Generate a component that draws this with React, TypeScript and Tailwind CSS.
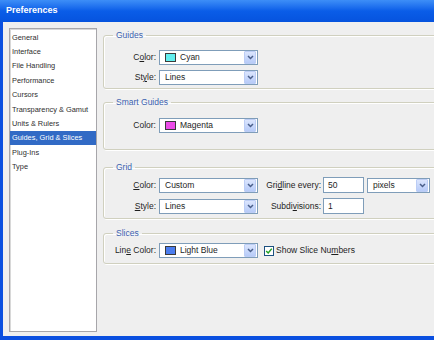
import React from 'react';

const sections = [
  'General',
  'Interface',
  'File Handling',
  'Performance',
  'Cursors',
  'Transparency & Gamut',
  'Units & Rulers',
  'Guides, Grid & Slices',
  'Plug-Ins',
  'Type',
];

// label with one underlined access key
function Label({ text, u }: { text: string; u: number }) {
  return (
    <span>
      {text.slice(0, u)}
      <span className="underline">{text[u]}</span>
      {text.slice(u + 1)}
    </span>
  );
}

function Select({ value, swatch, width = 'w-[99px]' }: { value: string; swatch?: string; width?: string }) {
  return (
    <div className={`${width} h-[15px] flex items-center bg-white border border-[#7f9db9]`}>
      {swatch ? (
        <span className="ml-[5px] w-[11px] h-[9px] border border-[#3a3a3a]" style={{ backgroundColor: swatch }} />
      ) : null}
      <span className={swatch ? 'ml-[4px] flex-1' : 'ml-[5px] flex-1'}>{value}</span>
      <div className="w-[12px] h-[13px] mr-[1px] flex items-center justify-center bg-gradient-to-b from-[#dbe5fd] to-[#b7cbf8] border border-[#bccdf5] rounded-[1px]">
        <svg width="7" height="5" viewBox="0 0 7 5">
          <path d="M1 1 L3.5 3.5 L6 1" fill="none" stroke="#4a5f8a" strokeWidth="1.5" />
        </svg>
      </div>
    </div>
  );
}

function Field({ value }: { value: string }) {
  return (
    <div className="w-[41px] h-[16px] flex items-center bg-white border border-[#7f9db9] pl-[4px]">{value}</div>
  );
}

function Group({ title, className, children }: { title: string; className: string; children: React.ReactNode }) {
  return (
    <fieldset className={`border border-[#d0d0bf] rounded-[3px] shadow-[inset_1px_1px_0_#ffffff,1px_1px_0_#ffffff] ${className}`}>
      <legend className="ml-[9px] px-[3px] h-[10px] leading-[10px] text-[#3b62b0]">{title}</legend>
      {children}
    </fieldset>
  );
}

export default function App() {
  return (
    <div className="w-[434px] h-[340px] overflow-hidden bg-[#0a4fe0] flex flex-col font-['Liberation_Sans',Arial,sans-serif] text-[8.5px] text-[#1e1e1e]">
      {/* title bar */}
      <div className="h-[22px] shrink-0 flex items-center px-[6px] bg-gradient-to-b from-[#3d8ef7] via-[#0a5de8] to-[#0653de]">
        <span className="text-white font-bold text-[9px]">Preferences</span>
      </div>

      <div className="flex-1 ml-[3px] mb-[4px] bg-[#efefef] flex pt-[6px] pl-[6px] gap-[6px]">
        {/* section list */}
        <div className="w-[88px] h-[304px] shrink-0 bg-white border border-[#a7a6aa] shadow-[inset_1px_1px_0_#d8d8d8] pt-[1px]">
          {sections.map((s) => (
            <div
              key={s}
              className={
                s === 'Guides, Grid & Slices'
                  ? 'h-[14.4px] flex items-center pl-[2px] text-[7.4px] bg-[#316ac5] text-white'
                  : 'h-[14.4px] flex items-center pl-[2px] text-[7.4px] text-[#2e2e2e]'
              }
            >
              {s}
            </div>
          ))}
        </div>

        {/* settings */}
        <div className="w-[340px] shrink-0 flex flex-col mt-[2px]">
          <Group title="Guides" className="h-[59px] pt-[10px]">
            <div className="flex flex-col gap-[5px]">
              <div className="flex items-center">
                <div className="w-[53px] text-right pr-[1px]"><Label text="Color:" u={1} /></div>
                <div className="ml-[2px]"><Select value="Cyan" swatch="#62eeee" /></div>
              </div>
              <div className="flex items-center">
                <div className="w-[53px] text-right pr-[1px]"><Label text="Style:" u={2} /></div>
                <div className="ml-[2px]"><Select value="Lines" /></div>
              </div>
            </div>
          </Group>

          <Group title="Smart Guides" className="h-[53px] mt-[8px] pt-[11px]">
            <div className="flex items-center">
              <div className="w-[53px] text-right pr-[1px]">Color:</div>
              <div className="ml-[2px]"><Select value="Magenta" swatch="#ec4ce8" /></div>
            </div>
          </Group>

          <Group title="Grid" className="h-[57px] mt-[12px] pt-[5px]">
            <div className="flex flex-col gap-[5px]">
              <div className="flex items-center">
                <div className="w-[53px] text-right pr-[1px]"><Label text="Color:" u={0} /></div>
                <div className="ml-[2px]"><Select value="Custom" /></div>
                <div className="w-[63px] text-right"><Label text="Gridline every:" u={3} /></div>
                <div className="ml-[2px]"><Field value="50" /></div>
                <div className="ml-[3px]"><Select value="pixels" width="w-[63px]" /></div>
              </div>
              <div className="flex items-center">
                <div className="w-[53px] text-right pr-[1px]"><Label text="Style:" u={0} /></div>
                <div className="ml-[2px]"><Select value="Lines" /></div>
                <div className="w-[63px] text-right"><Label text="Subdivisions:" u={5} /></div>
                <div className="ml-[2px]"><Field value="1" /></div>
              </div>
            </div>
          </Group>

          <Group title="Slices" className="h-[36px] mt-[9px] pt-[5px]">
            <div className="flex items-center">
              <div className="w-[53px] text-right pr-[1px]"><Label text="Line Color:" u={3} /></div>
              <div className="ml-[2px]"><Select value="Light Blue" swatch="#4b7def" /></div>
              <div className="ml-[6px] w-[10px] h-[10px] bg-white border border-[#1c5180] flex items-center justify-center">
                <svg width="8" height="8" viewBox="0 0 8 8">
                  <path d="M1.2 4 L3.2 6 L6.8 1.6" fill="none" stroke="#21a121" strokeWidth="1.5" />
                </svg>
              </div>
              <div className="ml-[2px]"><Label text="Show Slice Numbers" u={13} /></div>
            </div>
          </Group>
        </div>
      </div>
    </div>
  );
}
